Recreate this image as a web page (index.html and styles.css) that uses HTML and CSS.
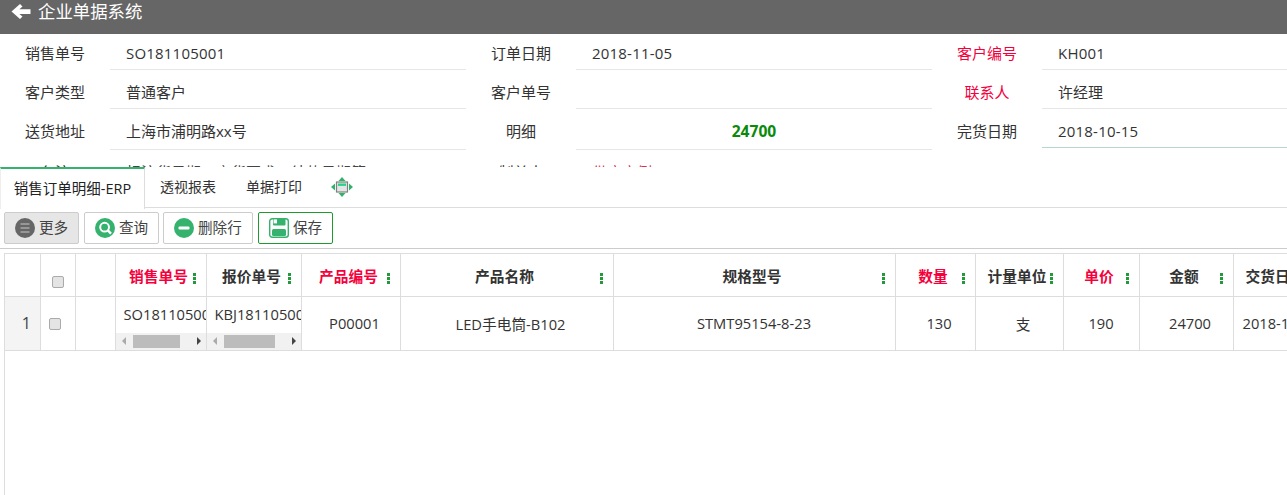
FILE: index.html
```
<!DOCTYPE html>
<html lang="zh-CN">
<head>
<meta charset="utf-8">
<title>企业单据系统</title>
<link rel="stylesheet" href="styles.css">
</head>
<body>
<header class="topbar">
  <svg class="back" viewBox="0 0 20 16" width="20" height="16"><path d="M9 0 L0.5 7.6 L9 15 L11.5 12.6 L8.4 10 H19.5 V5.2 H8.4 L11.5 2.6 Z" fill="#fff"/></svg>
  <span class="title">企业单据系统</span>
</header>
<section class="form">
  <div class="row r1">
    <label class="lab">销售单号</label><div class="val num">SO181105001</div>
    <label class="lab">订单日期</label><div class="val num">2018-11-05</div>
    <label class="lab red">客户编号</label><div class="val num">KH001</div>
  </div>
  <div class="row r2">
    <label class="lab">客户类型</label><div class="val">普通客户</div>
    <label class="lab">客户单号</label><div class="val"></div>
    <label class="lab red">联系人</label><div class="val">许经理</div>
  </div>
  <div class="row r3">
    <label class="lab">送货地址</label><div class="val">上海市浦明路xx号</div>
    <label class="lab">明细</label><div class="val total">24700</div>
    <label class="lab">完货日期</label><div class="val focus num">2018-10-15</div>
  </div>
  <div class="row r4">
    <label class="lab">备注</label><div class="val note">标注货日期，交货要求，结款日期等</div>
    <label class="lab">制单人</label><div class="val redval">供应商例</div>
    <label class="lab"></label><div class="val"></div>
  </div>
</section>
<nav class="tabs">
  <a class="tab active">销售订单明细-ERP</a>
  <a class="tab">透视报表</a>
  <a class="tab">单据打印</a>
  <svg class="expand" viewBox="0 0 22 20" width="22" height="20">
    <path d="M11 0 L14.5 4 H7.5 Z M11 20 L7.5 16 H14.5 Z M0 10 L4 6.5 V13.5 Z M22 10 L18 6.5 V13.5 Z" fill="#2fb36c"/>
    <rect x="5.5" y="5" width="11" height="10" fill="#e3e6e4" stroke="#808080" stroke-width="1.2"/>
    <rect x="7" y="6.5" width="8" height="2.4" fill="#27d38a"/>
  </svg>
</nav>
<div class="toolbar">
  <button class="btn more">
    <svg viewBox="0 0 20 20" width="20" height="20"><circle cx="10" cy="10" r="10" fill="#666"/><path d="M5.5 6 H14.5 M5.5 10 H14.5 M5.5 14 H14.5" stroke="#a8a8a8" stroke-width="1.6"/></svg>更多
  </button>
  <button class="btn">
    <svg viewBox="0 0 20 20" width="20" height="20"><circle cx="10" cy="10" r="10" fill="#36b26f"/><circle cx="9.6" cy="9.2" r="4.4" fill="none" stroke="#fff" stroke-width="2"/><path d="M12.8 12.4 L16 15.6" stroke="#fff" stroke-width="2.4"/></svg>查询
  </button>
  <button class="btn del">
    <svg viewBox="0 0 20 20" width="20" height="20"><circle cx="10" cy="10" r="10" fill="#36b26f"/><rect x="4.5" y="8.4" width="11" height="3.2" rx="1" fill="#fff"/></svg>删除行
  </button>
  <button class="btn save">
    <svg viewBox="0 0 20 20" width="20" height="20"><rect x="0.7" y="0.7" width="18.6" height="18.6" rx="2.5" fill="#fff" stroke="#36b26f" stroke-width="1.4"/><path d="M4 1 H16.5 V6.5 Q16.5 7.5 15.5 7.5 H5 Q4 7.5 4 6.5 Z" fill="#36b26f"/><rect x="4.6" y="1.4" width="3.4" height="4" fill="#fff"/><rect x="3" y="11" width="14" height="7" rx="1.5" fill="#36b26f"/></svg>保存
  </button>
</div>
<main class="gridwrap">
  <table class="grid">
    <colgroup>
      <col class="c-no"><col class="c-chk"><col class="c-act"><col class="c-so"><col class="c-kbj"><col class="c-pno"><col class="c-pname"><col class="c-spec"><col class="c-qty"><col class="c-unit"><col class="c-price"><col class="c-amt"><col class="c-date">
    </colgroup>
    <thead>
      <tr>
        <th></th>
        <th class="chkhead"><span class="chk"></span></th>
        <th></th>
        <th class="red"><span class="cap">销售单号</span><i class="dots"></i></th>
        <th><span class="cap">报价单号</span><i class="dots"></i></th>
        <th class="red"><span class="cap">产品编号</span><i class="dots"></i></th>
        <th><span class="cap">产品名称</span><i class="dots"></i></th>
        <th><span class="cap">规格型号</span><i class="dots"></i></th>
        <th class="red"><span class="cap">数量</span><i class="dots"></i></th>
        <th><span class="cap">计量单位</span><i class="dots"></i></th>
        <th class="red"><span class="cap">单价</span><i class="dots"></i></th>
        <th><span class="cap">金额</span><i class="dots"></i></th>
        <th class="clipped"><span class="cap">交货日期</span></th>
      </tr>
    </thead>
    <tbody>
      <tr>
        <td class="rowno">1</td>
        <td><span class="chk"></span></td>
        <td></td>
        <td class="scrollcell">
          <div class="celltext">SO181105001</div>
          <div class="sbar"><i class="al"></i><b class="thumb t1"></b><i class="ar"></i></div>
        </td>
        <td class="scrollcell">
          <div class="celltext">KBJ181105001</div>
          <div class="sbar"><i class="al"></i><b class="thumb t2"></b><i class="ar"></i></div>
        </td>
        <td class="nudge">P00001</td>
        <td class="nudge">LED手电筒-B102</td>
        <td>STMT95154-8-23</td>
        <td class="nudge">130</td>
        <td class="nudge">支</td>
        <td>190</td>
        <td class="nudge">24700</td>
        <td class="clipped">2018-11-20</td>
      </tr>
    </tbody>
  </table>
</main>
</body>
</html>
```
FILE: styles.css
```
* { box-sizing: border-box; }
html, body { margin: 0; height: 100%; overflow: hidden; background: #fff; }
body {
  width: 1287px; height: 495px;
  font-family: "Open Sans", "Noto Sans CJK SC", sans-serif;
  font-size: 15px; color: #333;
}
.topbar {
  height: 34px; background: #666; color: #fff;
  display: flex; align-items: flex-start; padding: 2px 0 0 11px; gap: 7px;
}
.back { margin-top: 2px; }
.title { font-size: 17.4px; line-height: 18px; }

.form { height: 133px; overflow: hidden; }
.row { display: grid; grid-template-columns: 110px 356px 110px 356px 110px 356px; width: 1398px; }
.r1 { grid-template-rows: 36px; }
.r2 { grid-template-rows: 39px; }
.r3 { grid-template-rows: 41px; }
.r4 { grid-template-rows: 39px; }
.lab { text-align: center; line-height: 44px; }
.val { padding-left: 16px; line-height: 44px; border-bottom: 1px solid #e6e6e6; }
.r1 .lab, .r1 .val { line-height: 38px; }
.r3 .lab, .r3 .val { line-height: 44px; }
.num { letter-spacing: .2px; }
.r4 .val { border: 0; }
.red { color: #f5003c; }
.redval { color: #d8304c; }
.note { color: #444; }
.total { text-align: center; font-weight: 700; font-size: 15.6px; color: #0a8a0a; padding-left: 0; }
.focus { border-bottom-color: #b5d8ca; height: 39px; }

.tabs {
  height: 41px; display: flex; align-items: stretch;
  border-bottom: 1px solid #ddd; position: relative;
}
.tab { width: 86px; text-align: center; line-height: 40px; font-size: 14px; }
.tab.active {
  width: 145px; color: #222; border-top: 2px solid #36b26f;
  border-right: 1px solid #ddd; border-left: 1px solid #eee;
  line-height: 39px; height: 42px; background: #fff; font-size: 14.5px;
}
.expand { margin: 10px 0 0 14px; }

.toolbar {
  height: 41px; padding: 4px 0 0 4px; display: flex; gap: 5px;
  align-items: flex-start; border-bottom: 1px solid #ccc;
}
.btn {
  height: 32px; width: 75px; padding: 0 0 4px 10px;
  display: flex; align-items: center; gap: 4px;
  background: #fff; border: 1px solid #ccc; border-radius: 2px;
  font: inherit; font-size: 14.6px; color: #444;
}
.btn svg { position: relative; top: 2px; }
.btn.more { background: #e6e6e6; }
.btn.del { width: 90px; margin-left: -1px; }
.btn.save { border-color: #1f9a2e; }

.gridwrap {
  margin: 4px 0 0 4px; height: 243px; overflow: hidden;
  border-left: 1px solid #ddd; border-top: 1px solid #ddd;
}
.grid { border-collapse: collapse; table-layout: fixed; width: 1316px; }
.c-no { width: 35px; } .c-chk { width: 35px; } .c-act { width: 40px; }
.c-so { width: 91px; } .c-kbj { width: 95px; } .c-pno { width: 99px; }
.c-pname { width: 213px; } .c-spec { width: 282px; } .c-qty { width: 80px; }
.c-unit { width: 88px; } .c-price { width: 76px; } .c-amt { width: 94px; } .c-date { width: 88px; }
.grid th, .grid td { border-right: 1px solid #ddd; border-bottom: 1px solid #ddd; text-align: center; padding: 0; overflow: hidden; white-space: nowrap; }
.grid th { height: 42px; font-weight: 700; font-size: 14.7px; position: relative; color: #333; }
.grid th.red { color: #f5003c; }
.grid td { height: 54px; font-size: 14.7px; }
.grid td.nudge { padding-left: 8px; }
.grid td.clipped { text-align: left; padding-left: 9px; }
.grid th.clipped { text-align: left; padding-left: 14px; }
.cap { position: relative; left: -2px; top: 1px; }
.dots {
  position: absolute; right: 10px; top: 19px; width: 3px; height: 11px;
  background: repeating-linear-gradient(#22993a 0 3px, transparent 3px 4px);
}
.chk {
  display: inline-block; width: 12px; height: 12px; vertical-align: middle;
  background: #e4e4e4; border: 1px solid #aaa; border-radius: 2px;
}
.chkhead .chk { position: relative; top: 5px; left: 0; }
.grid td .chk { position: relative; left: -3px; top: -1px; }
.grid .rowno { background: #f4f4f4; font-size: 16px; color: #444; padding-left: 8px; }
.scrollcell { vertical-align: top; }
.celltext { height: 36px; line-height: 35px; text-align: left; padding-left: 8px; overflow: hidden; }
.sbar { height: 17px; background: #f1f1f1; position: relative; }
.thumb { position: absolute; top: 2px; height: 13px; background: #bcbcbc; }
.t1 { left: 17px; width: 47px; }
.t2 { left: 17px; width: 51px; }
.al, .ar { position: absolute; top: 4px; width: 0; height: 0; border: 4px solid transparent; }
.al { left: 6px; border-right-color: #aaa; border-left-width: 0; }
.ar { right: 5px; border-left-color: #444; border-right-width: 0; }
```
